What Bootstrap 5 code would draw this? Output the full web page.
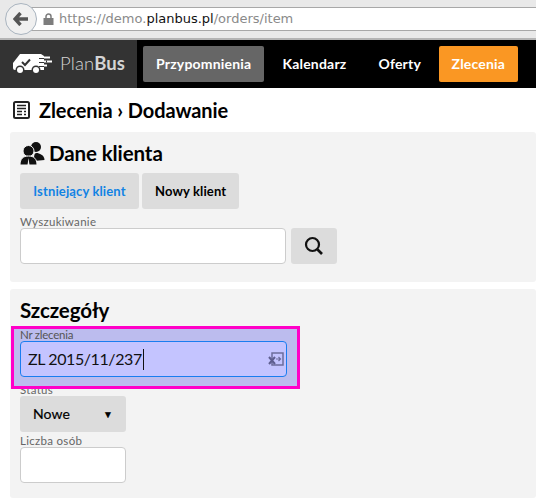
<!DOCTYPE html>
<html lang="pl"><head><meta charset="utf-8">
<link href="https://cdn.jsdelivr.net/npm/bootstrap@5.3.0/dist/css/bootstrap.min.css" rel="stylesheet">
<style>
html,body{height:498px;overflow:hidden}
body{font-family:Lato,"Liberation Sans",sans-serif;color:#000;background:#fff;position:relative}
.chromebar{height:40px;background:#e9e9e9;border-bottom:2px solid #b4b4b4;position:relative}
.backbtn{position:absolute;left:5px;top:3px;width:32px;height:32px;border-radius:50%;background:#f0f0f0;border:1px solid #a9b4bf;z-index:1}
.urlbox{position:absolute;left:20px;right:0;top:7px;height:24px;background:#fff;border-top:1px solid #a8a8a8;border-bottom:1px solid #a8a8a8;padding-left:39px;font:13px/22px "DejaVu Sans",sans-serif;color:#8a8a8a;white-space:nowrap}
.urlbox b{font-weight:400;color:#111}
.lockicon{position:absolute;left:43px;top:13px}
.topnav{height:48px;background:#000}
.brandbox{width:137px;height:48px;background:#333;gap:8px;padding-left:13px}
.brandtxt{font-size:18.5px;color:#d4d4d4;font-weight:300;letter-spacing:.1px}
.brandtxt b{font-weight:700}
.navi{height:36px;line-height:36px;padding:0 13px;font-size:14px;font-weight:700;color:#fff;border-radius:2px;text-decoration:none;white-space:nowrap;letter-spacing:.2px}
.navi-cur{background:#666;margin-right:-1px}
.navi-hot{background:#fa9723;padding:0 12.500px;margin-left:-1px}
.pagehead{height:44px;padding-left:13px;gap:9px}
.pagehead h1{font-size:20px;font-weight:700;margin:0;letter-spacing:-.1px}
.panelbox{margin-left:10px;background:#f3f3f3;border-radius:3px;padding:0 10px}
.panel-a{height:150px;margin-bottom:7px}
.panel-b{height:209px}
.panelbox h2{font-size:20.500px;font-weight:700;margin:0;letter-spacing:-.1px}
.sbtn{height:36px;line-height:36px;padding:0 13px;font-size:13px;font-weight:700;background:#dcdcdc;color:#000;border-radius:3px;border:0;letter-spacing:.13px}
.sbtn-on{color:#1283e4;width:119px;padding:0}
.flabel{font-size:11.500px;line-height:13px;color:#666;letter-spacing:.3px;display:block}
.finput{height:36px;background:#fff;border:1px solid #ccc;border-radius:4px;width:266px}
.overlaybox{position:absolute;left:11px;top:326px;width:289px;height:63px;border:3px solid #ff00c8;background:rgba(105,105,230,.4);z-index:5}
.numinput{position:absolute;left:6px;top:12px;width:267px;height:36px;border:1px solid #1a7df0;border-radius:4px;background:#c4c4ff;padding-left:7px;font-size:16px;letter-spacing:-.4px;line-height:34px;color:#111}
.numlabel{position:absolute;left:6px;top:-1px;font-size:11.500px;line-height:13px;color:#555;letter-spacing:-.25px}
.caretbar{display:inline-block;width:1px;height:21px;background:#111;vertical-align:-5px;margin-left:1px}
.keyicon{position:absolute;right:2px;top:10px}
</style></head>
<body>
<div class="chromebar">
  <div class="urlbox">https://demo.<b>planbus.pl</b>/orders/item</div>
  <div class="backbtn d-flex align-items-center justify-content-center">
    <svg width="16" height="14" viewBox="0 0 16 14"><path d="M7.500 1 2 7l5.500 6M2.500 7H15" fill="none" stroke="#555" stroke-width="3.400"/></svg>
  </div>
  <svg class="lockicon" width="11" height="12" viewBox="0 0 11 12"><path d="M3 6V3.500a2.500 2.500 0 0 1 5 0V6" fill="none" stroke="#7d7d7d" stroke-width="1.500"/><rect x="0.500" y="5" width="10" height="7" fill="#7d7d7d"/></svg>
</div>
<nav class="topnav d-flex align-items-center">
  <div class="brandbox d-flex align-items-center">
    <svg width="39" height="22" viewBox="0 0 39 22"><path d="M7 1H28l3 2v14H2Q0 17 0 15V10z" fill="#fff"/><path d="M26 5.500h12M26 9.500h13M26 13.500h10" stroke="#333" stroke-width="1.200"/><path d="M31 4.500h6M31 8.500h8M31 12.500h3" stroke="#fff" stroke-width="2.200"/><path d="M33 8.500h1" stroke="#333" stroke-width="2.200"/><circle cx="7" cy="17" r="4.500" fill="#333"/><circle cx="7" cy="17" r="3" fill="#fff"/><circle cx="23" cy="17" r="4.500" fill="#333"/><circle cx="23" cy="17" r="3" fill="#fff"/><path d="M9 9l3 3 5-5.500" fill="none" stroke="#333" stroke-width="2"/></svg>
    <span class="brandtxt">Plan<b>Bus</b></span>
  </div>
  <div class="d-flex align-items-center" style="gap:6px;margin-left:6px">
    <a class="navi navi-cur" href="#">Przypomnienia</a>
    <a class="navi" href="#">Kalendarz</a>
    <a class="navi" href="#">Oferty</a>
    <a class="navi navi-hot" href="#">Zlecenia</a>
  </div>
</nav>
<div class="pagehead d-flex align-items-center">
  <svg width="17" height="18" viewBox="0 0 17 18"><rect x="1" y="1" width="15" height="16" rx="1.500" fill="none" stroke="#222" stroke-width="2"/><path d="M4 4.500h9M4 7.500h9M4 10.500h5M11 10.500h2M4 13.500h5M11 13.500h2" stroke="#222" stroke-width="1.500"/></svg>
  <h1>Zlecenia › Dodawanie</h1>
</div>
<section class="panelbox panel-a">
  <div class="d-flex align-items-center gap-1" style="height:41px;padding-top:3px;padding-bottom:2px">
    <svg width="25" height="24" viewBox="0 0 25 24"><circle cx="16" cy="6" r="5" fill="#111"/><path d="M14 20c0-5 0-8 2.500-8s8 2 8 7z" fill="#111"/><circle cx="8.500" cy="10" r="5.500" fill="#111" stroke="#f3f3f3"/><path d="M0 24c0-6 3-9 8.500-9s8.500 3 8.500 9z" fill="#111" stroke="#f3f3f3"/><path d="M8.500 17l-1 7h2z" fill="#f3f3f3"/></svg>
    <h2>Dane klienta</h2>
  </div>
  <div class="d-flex" style="gap:3px">
    <button class="sbtn sbtn-on">Istniejący klient</button>
    <button class="sbtn">Nowy klient</button>
  </div>
  <label class="flabel" style="margin-top:6px">Wyszukiwanie</label>
  <div class="d-flex" style="gap:5px">
    <div class="finput"></div>
    <button class="sbtn d-flex align-items-center justify-content-center" style="width:46px;padding:0">
      <svg width="20" height="20" viewBox="0 0 20 20"><circle cx="8.500" cy="8.500" r="6.500" fill="none" stroke="#111" stroke-width="2.200"/><path d="M13.500 13.500 18 18" stroke="#111" stroke-width="2.600"/></svg>
    </button>
  </div>
</section>
<section class="panelbox panel-b">
  <h2 style="padding-top:9px;height:37px">Szczegóły</h2>
  <div style="height:57px"></div>
  <label class="flabel">Status</label>
  <button class="sbtn d-flex justify-content-between align-items-center" style="width:106px;padding:0 13px;font-size:14px;font-weight:400;-webkit-text-stroke:.2px #000">Nowe <span style="font-size:10px">▼</span></button>
  <label class="flabel" style="margin-top:2px">Liczba osób</label>
  <div class="finput" style="width:106px"></div>
</section>
<div class="overlaybox">
  <span class="numlabel">Nr zlecenia</span>
  <div class="numinput">ZL 2015/11/237<span class="caretbar"></span>
    <svg class="keyicon" width="16" height="14" viewBox="0 0 16 14"><path d="M4 1h11v12H4z" fill="none" stroke="#6c6c9c" stroke-width="1.500"/><path d="M8 7h4M10.500 5l2 2-2 2" fill="none" stroke="#6c6c9c" stroke-width="1.200"/><path d="M1 5l6 7M7 5l-6 7" stroke="#5f5f90" stroke-width="2"/></svg>
  </div>
</div>
<script src="https://cdn.jsdelivr.net/npm/bootstrap@5.3.0/dist/js/bootstrap.bundle.min.js"></script>
</body></html>
